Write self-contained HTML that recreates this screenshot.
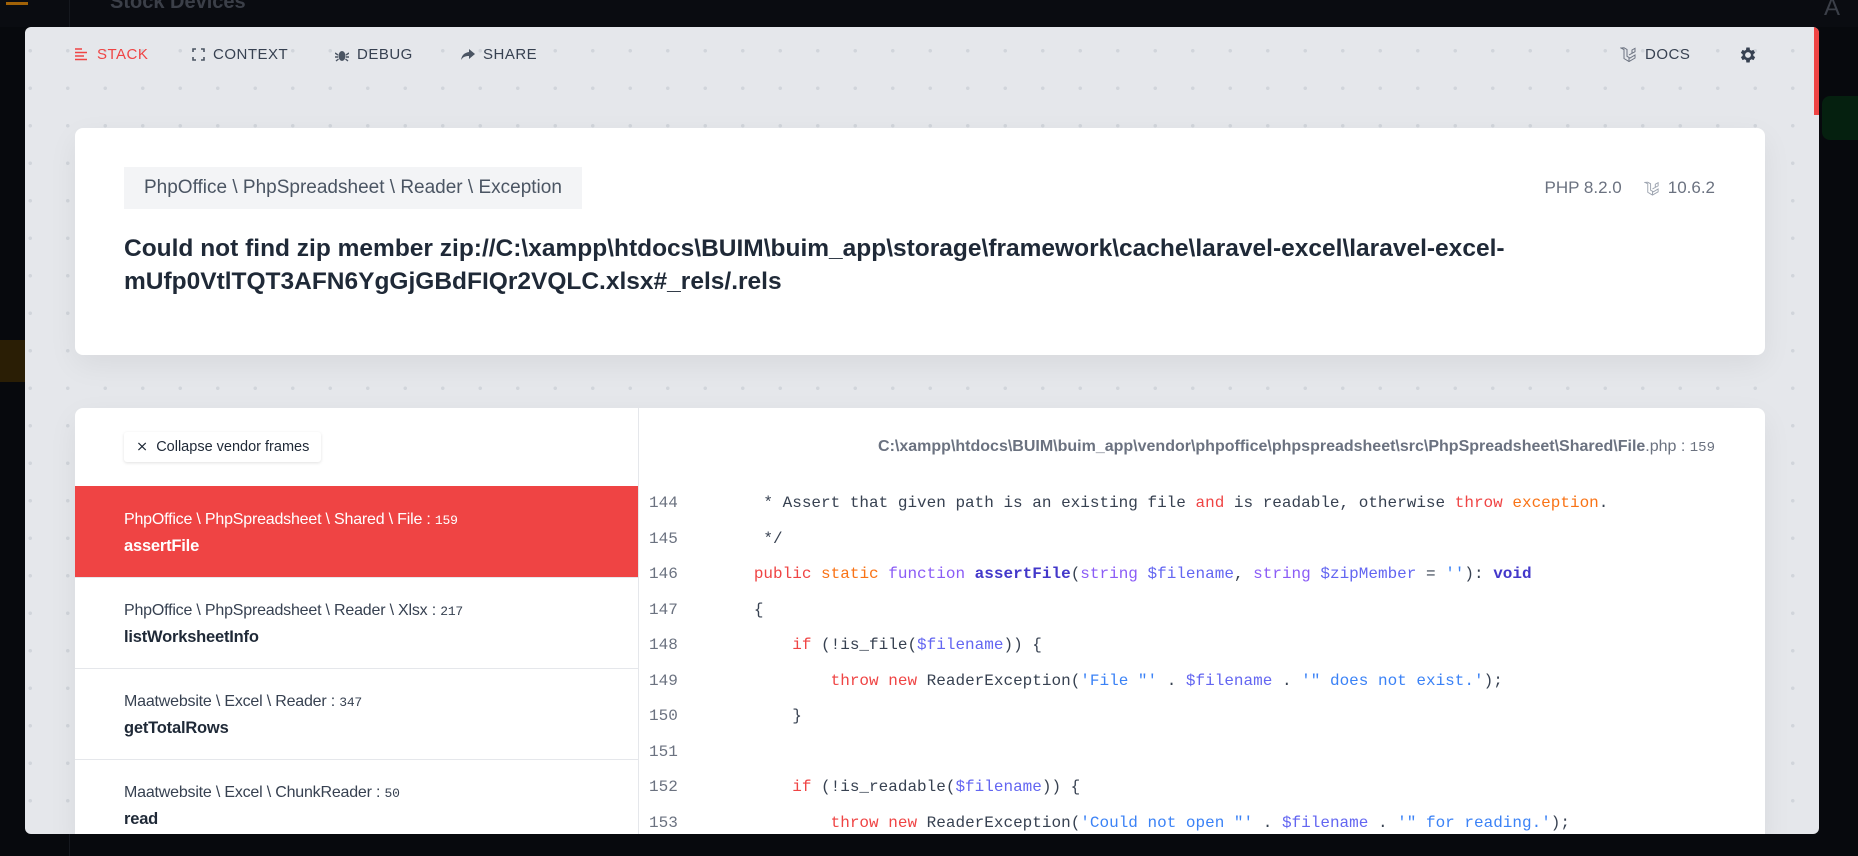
<!DOCTYPE html>
<html><head><meta charset="utf-8">
<style>
*{box-sizing:border-box;margin:0;padding:0}
html,body{width:1858px;height:856px;overflow:hidden;background:#07090d;font-family:"Liberation Sans",sans-serif}
.top{position:absolute;left:0;top:0;width:1858px;height:27px;background:#0a0c11}
.top .t{position:absolute;left:110px;top:-9px;color:#3b3f48;font-size:20px;font-weight:bold}
.side{position:absolute;left:0;top:0;width:70px;height:856px;border-right:1px solid #15181e}
.modal{position:absolute;left:25px;top:27px;width:1794px;height:807px;background-color:#e5e7eb;border-radius:6px;overflow:hidden;
background-image:radial-gradient(circle,#d1d5db 1.6px,transparent 2px);background-size:37.5px 37.5px;background-position:24px 5px}
.sb{position:absolute;right:0;top:0;width:5px;height:88px;background:#ef4444}
.nav{position:absolute;top:19px;font-size:15px;letter-spacing:.5px;color:#374151;display:flex;align-items:center;gap:8px}
.card{position:absolute;background:#fff;border-radius:8px;box-shadow:0 10px 30px rgba(0,0,0,.06)}
.badge{position:absolute;left:49px;top:39px;height:42px;padding:0 20px;background:#f3f4f6;font-size:19px;color:#4b5563;line-height:42px}
.msg{position:absolute;left:49px;top:104px;font-size:24.5px;font-weight:bold;color:#1f2937;line-height:33px;white-space:nowrap}
.ver{position:absolute;right:50px;top:50px;font-size:17px;color:#6b7280;display:flex;align-items:center;gap:8px}
.frame{position:absolute;left:0;width:563px;height:91px;border-top:1px solid #e5e7eb;padding-left:49px}
.frame .c{position:absolute;top:24px;left:49px;font-size:16px;color:#374151;white-space:nowrap;letter-spacing:-.2px}
.frame .c span{font-family:"Liberation Mono",monospace;font-size:13px}
.frame .f{position:absolute;top:50px;left:49px;font-size:16.5px;font-weight:bold;color:#1f2937;letter-spacing:-.2px}
.frame.act{background:#ef4444;border-top-color:#ef4444}
.frame.act .c,.frame.act .f{color:#fff}
.code{position:absolute;top:78px;font-family:"Liberation Mono",monospace;font-size:16px;color:#374151;white-space:pre;line-height:35.5px}
.ln{position:absolute;left:574px;top:78px;font-family:"Liberation Mono",monospace;font-size:16px;color:#6b7280;line-height:35.5px;white-space:pre}
.r{color:#ef4444}.o{color:#f97316}.p{color:#8b5cf6}.b{color:#4338ca;font-weight:bold}.s{color:#3b82f6}.v{color:#6366f1}
</style></head><body>
<div class="top"><div class="t">Stock Devices</div>
<div style="position:absolute;left:6px;top:2px;width:22px;height:3px;background:#a16207"></div>
<div style="position:absolute;right:18px;top:-6px;color:#3b3f48;font-size:24px">A</div></div>
<div class="side"></div>
<div style="position:absolute;left:0;top:340px;width:25px;height:42px;background:#2a1e05"></div>
<div style="position:absolute;left:1822px;top:96px;width:36px;height:44px;background:#05200f;border-radius:8px 0 0 8px"></div>
<div class="modal">
<div class="sb"></div>
<div class="nav" style="left:50px;color:#ef4444"><svg width="14" height="13" viewBox="0 0 14 13"><g stroke="#ef4444" stroke-width="1.5"><path d="M0 1h7M0 4.5h12M0 8h9M0 11.5h12"/></g></svg>STACK</div>
<div class="nav" style="left:167px"><svg width="13" height="13" viewBox="0 0 13 13" fill="none" stroke="#4b5563" stroke-width="1.6"><path d="M1 4V1h3M9 1h3v3M12 9v3H9M4 12H1V9"/></svg>CONTEXT</div>
<div class="nav" style="left:310px"><svg width="14" height="14" viewBox="0 0 14 14"><ellipse cx="7" cy="8" rx="3.5" ry="5" fill="#4b5563"/><path d="M0 5l3 2M14 5l-3 2M0 9h3M14 9h-3M1 13l2.5-2M13 13l-2.5-2" stroke="#4b5563" stroke-width="1.4"/></svg>DEBUG</div>
<div class="nav" style="left:436px"><svg width="14" height="12" viewBox="0 0 14 12"><path d="M8 0l6 5-6 5V7C4 7 2 8 0 11 1 6 3 4 8 3z" fill="#4b5563"/></svg>SHARE</div>
<div class="nav" style="left:1595px"><svg width="17" height="17" viewBox="0 0 17 17" fill="none" stroke="#6b7280" stroke-width="1"><path d="M1 2l3 1.5v9l5 3 6-3.5V9l-5 3-3-1.7V3.5L4 1.8zM9 9l3-1.7V4l3-1.7v3.4L12 7.3M9 15.5V12"/></svg>DOCS</div>
<svg style="position:absolute;left:1713px;top:18px" width="20" height="20" viewBox="0 0 24 24"><path fill="#374151" d="M19.4 13a7.5 7.5 0 000-2l2.1-1.6-2-3.5-2.5 1a7.6 7.6 0 00-1.7-1L15 3h-4l-.4 2.9a7.6 7.6 0 00-1.7 1l-2.5-1-2 3.5L6.6 11a7.5 7.5 0 000 2l-2.1 1.6 2 3.5 2.5-1a7.6 7.6 0 001.7 1L11 21h4l.4-2.9a7.6 7.6 0 001.7-1l2.5 1 2-3.5zM13 15.5a3.5 3.5 0 110-7 3.5 3.5 0 010 7z" transform="translate(-1 0)"/></svg>

<div class="card" style="left:50px;top:101px;width:1690px;height:227px">
<div class="badge">PhpOffice \ PhpSpreadsheet \ Reader \ Exception</div>
<div class="ver"><span style="margin-right:14px">PHP 8.2.0</span><svg width="16" height="17" viewBox="0 0 17 17" fill="none" stroke="#9ca3af" stroke-width="1"><path d="M1 2l3 1.5v9l5 3 6-3.5V9l-5 3-3-1.7V3.5L4 1.8zM9 9l3-1.7V4l3-1.7v3.4L12 7.3M9 15.5V12"/></svg>10.6.2</div>
<div class="msg">Could not find zip member zip://C:\xampp\htdocs\BUIM\buim_app\storage\framework\cache\laravel-excel\laravel-excel-<br>mUfp0VtlTQT3AFN6YgGjGBdFIQr2VQLC.xlsx#_rels/.rels</div>
</div>

<div class="card" style="left:50px;top:381px;width:1690px;height:440px;overflow:hidden">
<div style="position:absolute;left:49px;top:24px;height:30px;padding:0 12px;background:#fff;box-shadow:0 1px 3px rgba(0,0,0,.12);border-radius:3px;font-size:14.5px;color:#1f2937;line-height:30px">⨯&nbsp; Collapse vendor frames</div>
<div style="position:absolute;left:563px;top:0;width:1px;height:500px;background:#e5e7eb"></div>
<div class="frame act" style="top:78px"><div class="c">PhpOffice \ PhpSpreadsheet \ Shared \ File : <span>159</span></div><div class="f">assertFile</div></div>
<div class="frame" style="top:169px"><div class="c">PhpOffice \ PhpSpreadsheet \ Reader \ Xlsx : <span>217</span></div><div class="f">listWorksheetInfo</div></div>
<div class="frame" style="top:260px"><div class="c">Maatwebsite \ Excel \ Reader : <span>347</span></div><div class="f">getTotalRows</div></div>
<div class="frame" style="top:351px"><div class="c">Maatwebsite \ Excel \ ChunkReader : <span>50</span></div><div class="f">read</div></div>
<div style="position:absolute;right:50px;top:30px;font-size:16px;color:#6b7280;white-space:nowrap"><b style="color:#6b7280">C:\xampp\htdocs\BUIM\buim_app\vendor\phpoffice\phpspreadsheet\src\PhpSpreadsheet\Shared\File</b>.php : <span style="font-family:'Liberation Mono',monospace;font-size:14px">159</span></div>
<div class="ln">144
145
146
147
148
149
150
151
152
153</div>
<div class="code" style="left:602px">         * Assert that given path is an existing file <span class="r">and</span> is readable, otherwise <span class="r">throw</span> <span class="o">exception</span>.
         */
        <span class="r">public</span> <span class="o">static</span> <span class="p">function</span> <span class="b">assertFile</span>(<span class="p">string</span> <span class="v">$filename</span>, <span class="p">string</span> <span class="v">$zipMember</span> = <span class="s">''</span>): <span class="b">void</span>
        {
            <span class="r">if</span> (!is_file(<span class="v">$filename</span>)) {
                <span class="r">throw</span> <span class="r">new</span> ReaderException(<span class="s">'File "'</span> . <span class="v">$filename</span> . <span class="s">'" does not exist.'</span>);
            }

            <span class="r">if</span> (!is_readable(<span class="v">$filename</span>)) {
                <span class="r">throw</span> <span class="r">new</span> ReaderException(<span class="s">'Could not open "'</span> . <span class="v">$filename</span> . <span class="s">'" for reading.'</span>);</div>
</div>
</div>
</body></html>
